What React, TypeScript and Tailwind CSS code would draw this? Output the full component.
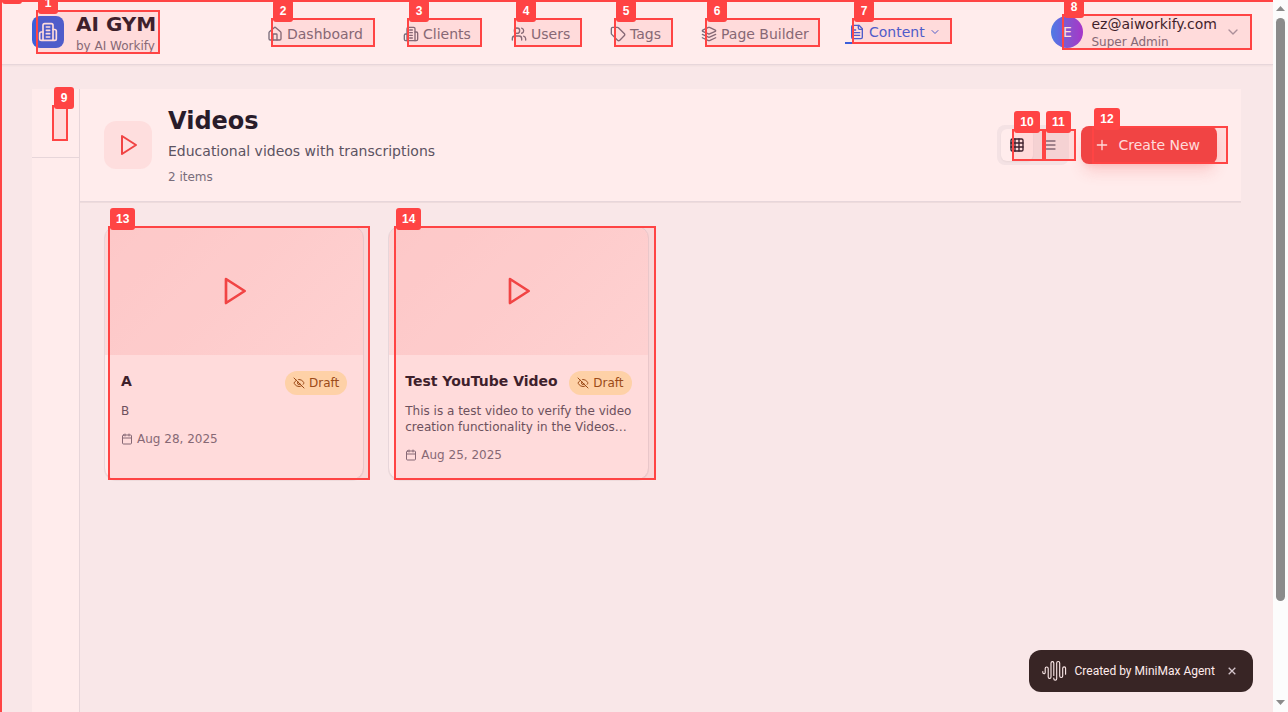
import React from 'react';

type Mark = { n: number; box: string; tag?: string };

const marks: Mark[] = [
  { n: 0, box: 'left-0 top-0 w-[1300px] h-[1000px]' },
  { n: 1, box: 'left-[36px] top-[10px] w-[124px] h-[44px]' },
  { n: 2, box: 'left-[271px] top-[18px] w-[104px] h-[29px]' },
  { n: 3, box: 'left-[407px] top-[18px] w-[75px] h-[29px]' },
  { n: 4, box: 'left-[514px] top-[18px] w-[68px] h-[29px]' },
  { n: 5, box: 'left-[614px] top-[18px] w-[59px] h-[29px]' },
  { n: 6, box: 'left-[705px] top-[18px] w-[115px] h-[29px]' },
  { n: 7, box: 'left-[852px] top-[18px] w-[100px] h-[26px]' },
  { n: 8, box: 'left-[1062px] top-[14px] w-[190px] h-[36px]' },
  { n: 9, box: 'left-[52px] top-[105px] w-[16px] h-[36px]' },
  { n: 10, box: 'left-[1012px] top-[129px] w-[32px] h-[32px]', tag: 'w-[26px]' },
  { n: 11, box: 'left-[1044px] top-[129px] w-[32px] h-[32px]' },
  { n: 12, box: 'left-[1092px] top-[126px] w-[136px] h-[38px]', tag: 'w-[26px]' },
  { n: 13, box: 'left-[108px] top-[226px] w-[262px] h-[254px]' },
  { n: 14, box: 'left-[394px] top-[226px] w-[262px] h-[254px]' },
];

function Icon({ className, children }: { className: string; children: React.ReactNode }) {
  return (
    <svg
      className={'shrink-0 ' + className}
      viewBox="0 0 24 24"
      fill="none"
      stroke="currentColor"
      strokeWidth="2"
      strokeLinecap="round"
      strokeLinejoin="round"
    >
      {children}
    </svg>
  );
}

const Building = ({ className }: { className: string }) => (
  <Icon className={className}>
    <path d="M6 22V4a2 2 0 0 1 2-2h8a2 2 0 0 1 2 2v18Z" />
    <path d="M6 12H4a2 2 0 0 0-2 2v6a2 2 0 0 0 2 2h2" />
    <path d="M18 9h2a2 2 0 0 1 2 2v9a2 2 0 0 1-2 2h-2" />
    <path d="M10 6h4M10 10h4M10 14h4M10 18h4" />
  </Icon>
);

const House = ({ className }: { className: string }) => (
  <Icon className={className}>
    <path d="M15 21v-8a1 1 0 0 0-1-1h-4a1 1 0 0 0-1 1v8" />
    <path d="M3 10a2 2 0 0 1 .709-1.528l7-5.999a2 2 0 0 1 2.582 0l7 5.999A2 2 0 0 1 21 10v9a2 2 0 0 1-2 2H5a2 2 0 0 1-2-2z" />
  </Icon>
);

const People = ({ className }: { className: string }) => (
  <Icon className={className}>
    <path d="M16 21v-2a4 4 0 0 0-4-4H6a4 4 0 0 0-4 4v2" />
    <circle cx="9" cy="7" r="4" />
    <path d="M22 21v-2a4 4 0 0 0-3-3.87" />
    <path d="M16 3.13a4 4 0 0 1 0 7.75" />
  </Icon>
);

const Tag = ({ className }: { className: string }) => (
  <Icon className={className}>
    <path d="M12.586 2.586A2 2 0 0 0 11.172 2H4a2 2 0 0 0-2 2v7.172a2 2 0 0 0 .586 1.414l8.704 8.704a2.426 2.426 0 0 0 3.42 0l6.58-6.58a2.426 2.426 0 0 0 0-3.42z" />
    <circle cx="7.5" cy="7.5" r=".5" fill="currentColor" />
  </Icon>
);

const Layers = ({ className }: { className: string }) => (
  <Icon className={className}>
    <path d="m12.83 2.18a2 2 0 0 0-1.66 0L2.6 6.08a1 1 0 0 0 0 1.83l8.58 3.91a2 2 0 0 0 1.66 0l8.58-3.9a1 1 0 0 0 0-1.83Z" />
    <path d="m22 17.65-9.17 4.16a2 2 0 0 1-1.66 0L2 17.65" />
    <path d="m22 12.65-9.17 4.16a2 2 0 0 1-1.66 0L2 12.65" />
  </Icon>
);

const Doc = ({ className }: { className: string }) => (
  <Icon className={className}>
    <path d="M15 2H6a2 2 0 0 0-2 2v16a2 2 0 0 0 2 2h12a2 2 0 0 0 2-2V7Z" />
    <path d="M14 2v4a2 2 0 0 0 2 2h4" />
    <path d="M10 9H8M16 13H8M16 17H8" />
  </Icon>
);

const Chevron = ({ className }: { className: string }) => (
  <Icon className={className}>
    <path d="m6 9 6 6 6-6" />
  </Icon>
);

const Play = ({ className }: { className: string }) => (
  <Icon className={className}>
    <polygon points="6 3 20 12 6 21 6 3" />
  </Icon>
);

const EyeOff = ({ className }: { className: string }) => (
  <Icon className={className}>
    <path d="M9.88 9.88a3 3 0 1 0 4.24 4.24" />
    <path d="M10.73 5.08A10.43 10.43 0 0 1 12 5c7 0 10 7 10 7a13.16 13.16 0 0 1-1.67 2.68" />
    <path d="M6.61 6.61A13.526 13.526 0 0 0 2 12s3 7 10 7a9.74 9.74 0 0 0 5.39-1.61" />
    <path d="m2 2 20 20" />
  </Icon>
);

const Calendar = ({ className }: { className: string }) => (
  <Icon className={className}>
    <path d="M8 2v4M16 2v4M3 10h18" />
    <rect width="18" height="18" x="3" y="4" rx="2" />
  </Icon>
);

function NavItem({ icon, label, className }: { icon: React.ReactNode; label: string; className: string }) {
  return (
    <a className={'flex shrink-0 items-center gap-1 text-sm text-gray-500 whitespace-nowrap ' + className}>
      {icon}
      {label}
    </a>
  );
}

function VideoCard({ title, text, date }: { title: string; text: string; date: string }) {
  return (
    <div className="overflow-hidden rounded-xl border border-gray-200 bg-white shadow-2xs">
      <div className="flex h-32 items-center justify-center bg-[linear-gradient(135deg,#ef444420,#ef444410)]">
        <Play className="size-8 text-[#ef4444]" />
      </div>
      <div className="p-4">
        <div className="flex justify-between">
          <h3 className="text-sm font-semibold text-gray-900 whitespace-nowrap">{title}</h3>
          <span className="flex h-6 shrink-0 items-center gap-1 rounded-full bg-[#fef3c0] px-2 text-xs text-[#854d0e]">
            <EyeOff className="size-3" />
            Draft
          </span>
        </div>
        <p className="mt-2 text-xs text-gray-600">{text}</p>
        <div className="mt-3 flex items-center gap-1 text-xs text-gray-500">
          <Calendar className="size-3" />
          {date}
        </div>
      </div>
    </div>
  );
}

export default function App() {
  return (
    <div className="flex h-[712px] w-[1288px] overflow-hidden font-['DejaVu_Sans',sans-serif]">
      <div className="relative flex w-[1273px] shrink-0 flex-col overflow-hidden bg-gray-50">
        <header className="flex h-[65px] shrink-0 items-center border-b border-gray-200 bg-white pr-8 pl-8 shadow-xs">
          <div className="flex w-[235px] shrink-0 items-center gap-3">
            <div className="flex size-8 items-center justify-center rounded-lg bg-[#2563eb] text-white">
              <Building className="size-5" />
            </div>
            <div className="pt-[2px]">
              <div className="h-6 text-xl leading-6 font-bold text-gray-900">AI GYM</div>
              <div className="mt-[2px] text-xs text-gray-500">by AI Workify</div>
            </div>
          </div>
          <nav className="flex items-center pt-[3px]">
            <NavItem className="w-[136px]" icon={<House className="size-4" />} label="Dashboard" />
            <NavItem className="w-[108px]" icon={<Building className="size-4" />} label="Clients" />
            <NavItem className="w-[99px]" icon={<People className="size-4" />} label="Users" />
            <NavItem className="w-[91px]" icon={<Tag className="size-4" />} label="Tags" />
            <NavItem className="w-[144px]" icon={<Layers className="size-4" />} label="Page Builder" />
            <a className="mb-[5px] flex h-[26px] w-[100px] items-center gap-1 border-b-2 border-[#2563eb] pt-[3px] pl-[4px] text-sm text-[#2563eb]">
              <Doc className="size-4" />
              Content
              <Chevron className="size-3" />
            </a>
          </nav>
          <div className="ml-auto flex items-center gap-2">
            <div className="flex size-8 items-center justify-center rounded-full bg-[linear-gradient(to_right,#3b82f6,#9333ea)] text-sm text-white">
              E
            </div>
            <div>
              <div className="h-[18px] text-sm leading-[18px] text-gray-900">ez@aiworkify.com</div>
              <div className="pt-px text-xs text-gray-500">Super Admin</div>
            </div>
            <Chevron className="size-4 text-gray-400" />
          </div>
        </header>

        <main className="flex grow px-8 pt-6">
          <aside className="w-12 shrink-0 border-r border-gray-200 bg-white">
            <div className="h-[69px] border-b border-gray-200" />
          </aside>
          <section className="grow">
            <div className="flex h-[113px] items-center border-b border-gray-200 bg-white px-6 shadow-2xs">
              <div className="flex size-12 items-center justify-center rounded-xl bg-[#ef444415]">
                <Play className="size-6 text-[#ef4444]" />
              </div>
              <div className="ml-4">
                <h1 className="text-2xl font-bold text-gray-900">Videos</h1>
                <p className="mt-1 text-sm text-gray-600">Educational videos with transcriptions</p>
                <p className="mt-2 text-xs text-gray-500">2 items</p>
              </div>
              <div className="ml-auto flex items-center gap-3">
                <div className="flex rounded-lg bg-gray-100 p-1">
                  <div className="flex size-8 items-center justify-center rounded-md bg-white text-gray-900 shadow-xs">
                    <Icon className="size-4">
                      <rect width="18" height="18" x="3" y="3" rx="2" />
                      <path d="M3 9h18M3 15h18M9 3v18M15 3v18" />
                    </Icon>
                  </div>
                  <div className="flex size-8 items-center justify-center text-gray-500">
                    <Icon className="size-4">
                      <path d="M3 12h.01M3 18h.01M3 6h.01M8 12h13M8 18h13M8 6h13" />
                    </Icon>
                  </div>
                </div>
                <button className="flex h-[38px] w-[136px] items-center gap-[8.5px] rounded-lg bg-[#ef4444] pl-[13px] text-sm whitespace-nowrap text-white shadow-lg shadow-[#ef4444]/20">
                  <Icon className="size-4">
                    <path d="M5 12h14M12 5v14" />
                  </Icon>
                  Create New
                </button>
              </div>
            </div>
            <div className="grid grid-cols-4 gap-6 p-6">
              <VideoCard title="A" text="B" date="Aug 28, 2025" />
              <VideoCard
                title="Test YouTube Video"
                text="This is a test video to verify the video creation functionality in the Videos…"
                date="Aug 25, 2025"
              />
            </div>
          </section>
        </main>

        <div className="absolute top-[650px] left-[1029px] flex h-[42px] w-[224px] items-center rounded-xl bg-[#222222] pl-[13px] font-[Roboto,sans-serif] text-xs text-white">
          <svg className="h-[22px] w-[25px]" viewBox="0 0 25 22" fill="none" stroke="currentColor" strokeWidth="1.1" strokeLinecap="round">
            <path d="M.8 11.500v1a1.200 1.200 0 0 0 2.400 0V8.500a1.500 1.500 0 0 1 3 0v8.500a1.400 1.400 0 0 0 2.800 0V3a1.400 1.400 0 0 1 2.800 0v12.500" />
            <path d="M11.800 18v.7a1.450 1.450 0 0 0 2.900 0V3a1.500 1.500 0 0 1 3 0v13a1.500 1.500 0 0 0 3 0V8.300a1.450 1.450 0 0 1 2.900 0v6" />
          </svg>
          <span className="ml-[7.500px] w-[140px] whitespace-nowrap">Created by MiniMax Agent</span>
          <svg className="ml-[13.500px] size-2 text-gray-300" viewBox="0 0 8 8" stroke="currentColor" strokeWidth="1.3">
            <path d="M.7.7l6.600 6.600M7.300.7L.7 7.300" />
          </svg>
        </div>

        {marks.map((m) => (
          <div key={m.n} className={'absolute border-2 border-[#ff4444] bg-[#ff4444]/10 ' + m.box}>
            <span
              className={
                "absolute -top-5 left-0 flex h-[22px] min-w-5 items-center justify-center rounded-[3px] bg-[#ff4444] px-1.5 font-['Liberation_Sans',sans-serif] text-xs font-bold text-white " +
                (m.tag ?? '')
              }
            >
              {m.n}
            </span>
          </div>
        ))}
      </div>
      <div className="flex w-[15px] flex-col items-center bg-[#fcfcfc] pt-[6px]">
        <svg className="h-[5px] w-[9px] shrink-0" viewBox="0 0 9 5" fill="#8b8b8b">
          <path d="M4.500 0L9 5H0z" />
        </svg>
        <div className="mt-[7px] h-[583px] w-[9px] shrink-0 rounded-full bg-[#8b8b8b]" />
        <svg className="mt-[99px] h-[5px] w-[9px] shrink-0" viewBox="0 0 9 5" fill="#8b8b8b">
          <path d="M4.500 5L9 0H0z" />
        </svg>
      </div>
    </div>
  );
}
